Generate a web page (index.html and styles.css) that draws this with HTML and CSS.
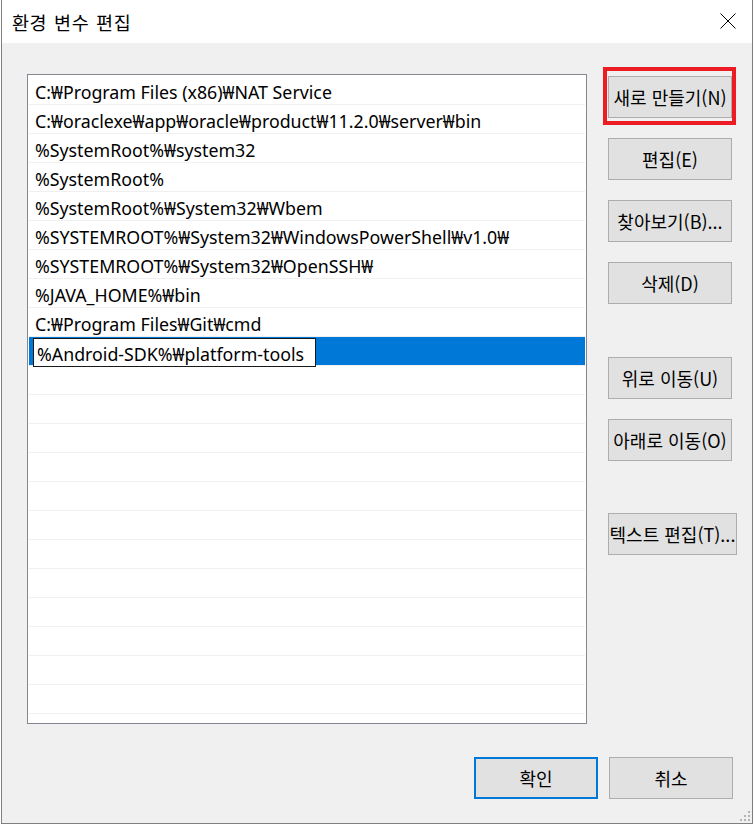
FILE: index.html
```html
<!DOCTYPE html>
<html lang="ko">
<head>
<meta charset="utf-8">
<title>환경 변수 편집</title>
<link rel="stylesheet" href="styles.css">
</head>
<body>
<div class="window">
  <div class="titlebar">
    <span class="title">환경 변수 편집</span>
    <svg class="close" width="16" height="16" viewBox="0 0 16 16"><path d="M0.5 0.5 L15.5 15.5 M15.5 0.5 L0.5 15.5" stroke="#000" stroke-width="1" fill="none"/></svg>
  </div>
  <div class="body">
    <div class="content">
      <div class="list">
        <div class="row">C:₩Program Files (x86)₩NAT Service</div>
        <div class="row">C:₩oraclexe₩app₩oracle₩product₩11.2.0₩server₩bin</div>
        <div class="row">%SystemRoot%₩system32</div>
        <div class="row">%SystemRoot%</div>
        <div class="row">%SystemRoot%₩System32₩Wbem</div>
        <div class="row">%SYSTEMROOT%₩System32₩WindowsPowerShell₩v1.0₩</div>
        <div class="row">%SYSTEMROOT%₩System32₩OpenSSH₩</div>
        <div class="row">%JAVA_HOME%₩bin</div>
        <div class="row">C:₩Program Files₩Git₩cmd</div>
        <div class="row selected"><span class="editor">%Android-SDK%₩platform-tools</span></div>
        <div class="row"></div>
        <div class="row"></div>
        <div class="row"></div>
        <div class="row"></div>
        <div class="row"></div>
        <div class="row"></div>
        <div class="row"></div>
        <div class="row"></div>
        <div class="row"></div>
        <div class="row"></div>
        <div class="row"></div>
        <div class="row"></div>
      </div>
      <div class="side">
        <div class="highlight-wrap">
          <button class="btn">새로 만들기(N)</button>
          <span class="highlight"></span>
        </div>
        <button class="btn">편집(E)</button>
        <button class="btn">찾아보기(B)...</button>
        <button class="btn">삭제(D)</button>
        <button class="btn group">위로 이동(U)</button>
        <button class="btn">아래로 이동(O)</button>
        <button class="btn group wide">텍스트 편집(T)...</button>
      </div>
    </div>
    <div class="footer">
      <button class="btn default">확인</button>
      <button class="btn">취소</button>
    </div>
    <svg class="grip" width="11" height="11" viewBox="0 0 11 11">
      <rect x="8" y="0" width="2" height="2" fill="#b4b4b4"/>
      <rect x="4" y="4" width="2" height="2" fill="#b4b4b4"/>
      <rect x="8" y="4" width="2" height="2" fill="#b4b4b4"/>
      <rect x="0" y="8" width="2" height="2" fill="#b4b4b4"/>
      <rect x="4" y="8" width="2" height="2" fill="#b4b4b4"/>
      <rect x="8" y="8" width="2" height="2" fill="#b4b4b4"/>
    </svg>
  </div>
</div>
</body>
</html>
```
FILE: styles.css
```css
* { box-sizing: border-box; }
html, body { margin: 0; padding: 0; background: #ffffff; }
body {
  font-family: "Noto Sans CJK KR", "Noto Sans", sans-serif;
  color: #000;
  width: 754px;
  height: 825px;
  overflow: hidden;
}
.window {
  margin-left: 1px;
  width: 752px;
  height: 824px;
  border-left: 1px solid #7f7f7f;
  border-right: 1px solid #7f7f7f;
  border-bottom: 1px solid #7f7f7f;
  display: flex;
  flex-direction: column;
}
.titlebar {
  height: 43px;
  background: #fff;
  display: flex;
  align-items: center;
  justify-content: space-between;
  padding: 0 16px 0 10px;
  flex: none;
}
.title {
  font-size: 18.5px;
  font-family: "Noto Sans CJK KR", sans-serif;
  letter-spacing: 0.6px;
  word-spacing: 1px;
  margin-top: 0;
}
.close { display: block; margin-top: -1px; }
.body {
  flex: 1;
  background: #f0f0f0;
  position: relative;
  display: flex;
  flex-direction: column;
}
.content {
  display: flex;
  padding: 31px 0 0 25px;
}
.list {
  width: 560px;
  height: 650px;
  background: #fff;
  border: 1px solid #828790;
  padding: 1px 1px 0 1px;
  overflow: hidden;
  font-family: "Noto Sans", "Noto Sans CJK KR", sans-serif;
  font-size: 17.8px;
}
.row {
  height: 29px;
  border-bottom: 1px solid #f0f0f0;
  padding: 4px 0 0 6px;
  line-height: 24px;
  white-space: nowrap;
  position: relative;
}
.row.selected { background: #0078d7; }
.editor {
  position: absolute;
  left: 4px;
  top: 1px;
  width: 283px;
  height: 29px;
  background: #fff;
  border: 1px solid #1a1a1a;
  padding: 3px 0 0 3px;
  line-height: 24px;
}
.side {
  margin-left: 21px;
  padding-top: 2px;
  display: flex;
  flex-direction: column;
  gap: 20px;
  width: 124px;
}
.btn {
  width: 124px;
  height: 42px;
  background: #e1e1e1;
  border: 1px solid #adadad;
  font-family: "Noto Sans CJK KR", sans-serif;
  font-size: 18px;
  color: #000;
  padding: 0;
  margin: 0;
  white-space: nowrap;
  display: flex;
  align-items: center;
  justify-content: center;
}
.btn.group { margin-top: 33px; }
.btn.group.wide { margin-top: 32px; width: 129px; }
.btn.default { border: 2px solid #0078d7; }
.highlight-wrap { position: relative; height: 42px; }
.highlight {
  position: absolute;
  top: -9px;
  left: -5px;
  right: -4px;
  bottom: -7px;
  border: 4px solid #ed1c24;
  pointer-events: none;
}
.footer {
  display: flex;
  justify-content: flex-end;
  gap: 11px;
  padding: 33px 19px 0 0;
}
.grip {
  position: absolute;
  right: 1px;
  bottom: 1px;
}
```
